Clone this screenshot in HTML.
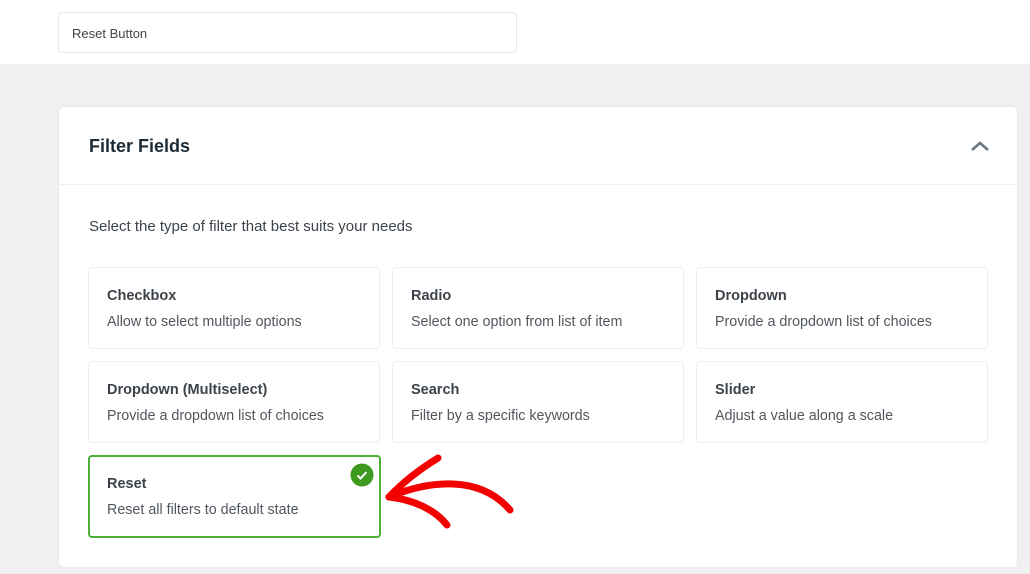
<!DOCTYPE html>
<html><head><meta charset="utf-8"><style>
*{box-sizing:border-box;margin:0;padding:0}
body{width:1030px;height:574px;overflow:hidden;background:#f0f0f1;font-family:"Liberation Sans",sans-serif;position:relative}
.top{position:absolute;left:0;top:0;width:1030px;height:64px;background:#fff}
.inp{position:absolute;left:58px;top:12px;width:459px;height:41px;border:1px solid #e6e7e9;border-radius:4px;font-size:13px;color:#444;padding:13px 0 0 13px}
.panel{position:absolute;left:58px;top:106px;width:960px;height:462px;background:#fff;border-radius:6px;border:1px solid #ececec}
.hd{height:78px;border-bottom:1px solid #f0f0f0;position:relative}
.hd h2{position:absolute;left:30px;top:29px;font-size:18px;font-weight:bold;color:#1d2b36}
.sub{position:absolute;left:30px;top:111px;font-size:15px;color:#3c434a}
.c{position:absolute;width:292px;height:82px;border:1px solid #eeeff1;border-radius:4px}
.c b{position:absolute;left:18px;top:20px;font-size:14.5px;color:#3c434a}
.c span{position:absolute;left:18px;top:46px;font-size:14.3px;color:#50575e}
.sel{border:2px solid #4caf3a}
.sel b{left:17px;top:19px}.sel span{left:17px;top:45px}
</style></head><body>
<div class="top"><div class="inp">Reset Button</div></div>
<div class="panel">
<div class="hd"><h2>Filter Fields</h2>
<svg style="position:absolute;left:910px;top:32px" width="22" height="14"><path d="M3 11 L11 4 L19 11" stroke="#6b7780" stroke-width="2.6" fill="none"/></svg></div>
<div class="sub">Select the type of filter that best suits your needs</div>
</div>
<div class="c" style="left:88px;top:267px"><b>Checkbox</b><span>Allow to select multiple options</span></div>
<div class="c" style="left:392px;top:267px"><b>Radio</b><span>Select one option from list of item</span></div>
<div class="c" style="left:696px;top:267px"><b>Dropdown</b><span>Provide a dropdown list of choices</span></div>
<div class="c" style="left:88px;top:361px"><b>Dropdown (Multiselect)</b><span>Provide a dropdown list of choices</span></div>
<div class="c" style="left:392px;top:361px"><b>Search</b><span>Filter by a specific keywords</span></div>
<div class="c" style="left:696px;top:361px"><b>Slider</b><span>Adjust a value along a scale</span></div>
<div class="c sel" style="left:88px;top:455px;height:83px;width:293px"><b>Reset</b><span>Reset all filters to default state</span>
<svg style="position:absolute;left:260px;top:6px" width="24" height="24"><circle cx="12" cy="12" r="11.5" fill="#3d9a1e"/><path d="M7.5 12.5 L10.5 15.5 L16.5 9" stroke="#fff" stroke-width="2" fill="none"/></svg></div>
<svg style="position:absolute;left:0;top:0" width="1030" height="574"><g stroke="#f30000" stroke-width="7" fill="none" stroke-linecap="round" stroke-linejoin="round">
<path d="M389 497 C430 480 480 475 510 510"/>
<path d="M389 497 C405 480 425 466 438 458"/>
<path d="M389 497 C415 500 435 510 447 525"/>
</g></svg>
</body></html>
